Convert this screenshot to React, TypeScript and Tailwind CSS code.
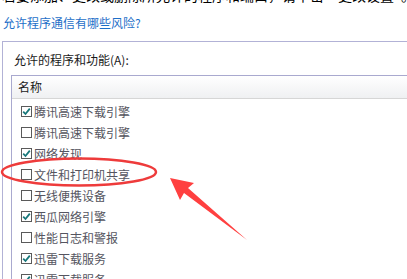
import React from "react";

const items: { label: string; checked: boolean }[] = [
  { label: "腾讯高速下载引擎", checked: true },
  { label: "腾讯高速下载引擎", checked: false },
  { label: "网络发现", checked: true },
  { label: "文件和打印机共享", checked: false },
  { label: "无线便携设备", checked: false },
  { label: "西瓜网络引擎", checked: true },
  { label: "性能日志和警报", checked: false },
  { label: "迅雷下载服务", checked: true },
  { label: "迅雷下载服务", checked: true },
];

function Box({ checked }: { checked: boolean }) {
  return (
    <div className="w-[11px] h-[11px] border border-[#5a5a5a] bg-white flex items-center justify-center shrink-0">
      {checked && (
        <svg width="9" height="9" viewBox="0 0 9 9">
          <path d="M1.2 4.6 L3.5 7 L7.8 1.6" fill="none" stroke="#17777a" strokeWidth="1.8" />
        </svg>
      )}
    </div>
  );
}

export default function App() {
  return (
    <div
      className="relative w-[407px] h-[279px] overflow-hidden bg-white"
      style={{ fontFamily: '"Microsoft YaHei", "Noto Sans CJK SC", sans-serif' }}
    >
      <div className="h-[3px] overflow-hidden">
        <div className="mt-[-12px] pl-[2px] text-[14px] leading-[15px] text-black whitespace-nowrap">
          若要添加、更改或删除所允许的程序和端口，请单击“更改设置”。
        </div>
      </div>
      <div className="mt-[12px] pl-[3px] text-[12px] leading-[16px] text-[#1e6fc8] whitespace-nowrap">
        允许程序通信有哪些风险?
      </div>
      <div className="mt-[10px] ml-[2px] border-l border-t border-[#b2b2d6] h-[300px]">
        <div className="pt-[10px] pl-[11px] text-[12px] leading-[16px] text-[#1a1a1a] whitespace-nowrap">
          允许的程序和功能(A):
        </div>
        <div className="mt-[7px] ml-[8px] border-l border-t border-[#a9a9cf]">
          <div className="h-[23px] bg-gradient-to-b from-white to-[#eff0f2] border-b border-[#d6d6d6] flex items-center pl-[6px] text-[12px] text-[#1a1a1a]">
            名称
          </div>
          <div className="pt-[2px]">
            {items.map((it, i) => (
              <div key={i} className="h-[21px] flex items-center pl-[9px] gap-[2px]">
                <Box checked={it.checked} />
                <span className="text-[12px] leading-[16px] text-[#555560] whitespace-nowrap">{it.label}</span>
              </div>
            ))}
          </div>
        </div>
      </div>
      <svg className="absolute inset-0 pointer-events-none" width="407" height="279" viewBox="0 0 407 279">
        <ellipse cx="79" cy="172" rx="77" ry="13.5" fill="none" stroke="#ee3b3b" strokeWidth="2.5" />
        <polygon points="170,178 194,183 188,188 247,240 184,193 180,200" fill="#ff4040" />
      </svg>
    </div>
  );
}
